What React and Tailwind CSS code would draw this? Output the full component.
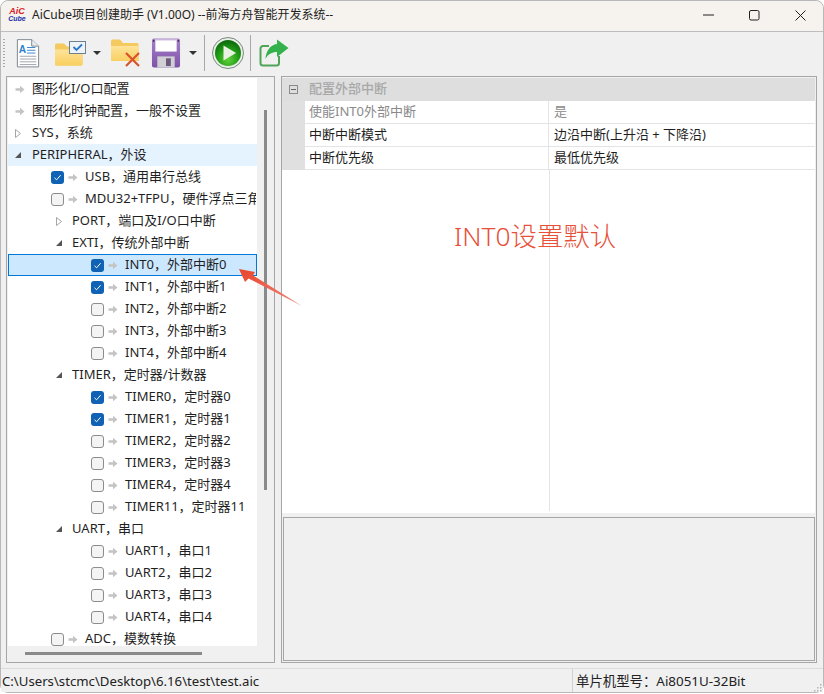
function Arrow() {
  return (
    <svg width="10" height="9" viewBox="0 0 10 9" className="shrink-0">
      <path d="M0.5 3.2H5V0.8L9.5 4.5L5 8.2V5.8H0.5Z" fill="#c4c4c4" />
    </svg>
  );
}

function Check({ on }) {
  return on ? (
    <span className="flex h-[13px] w-[13px] shrink-0 items-center justify-center rounded-[3px] bg-[#0f62b4]">
      <svg width="9" height="9" viewBox="0 0 9 9">
        <path d="M1.5 4.8L3.6 6.8L7.6 2.2" fill="none" stroke="#fff" strokeWidth="1" />
      </svg>
    </span>
  ) : (
    <span className="h-[13px] w-[13px] shrink-0 rounded-[3px] border border-[#8c8c8c] bg-[#f4f4f4]" />
  );
}

function Tri({ open }) {
  return open ? (
    <svg width="6" height="6" viewBox="0 0 6 6" className="shrink-0">
      <path d="M6 0V6H0Z" fill="#555" />
    </svg>
  ) : (
    <svg width="6" height="9" viewBox="0 0 6 9" className="shrink-0">
      <path d="M0.5 0.5L5.5 4.5L0.5 8.5Z" fill="#fff" stroke="#a6a6a6" />
    </svg>
  );
}

function LeafRow({ label, check, indent, state }) {
  const bg =
    state === "sel"
      ? "border border-[#0078d7] bg-[#cce8ff]"
      : "border border-transparent";
  return (
    <div className={`flex h-[22px] w-[249px] shrink-0 items-center overflow-hidden whitespace-nowrap ${bg} ${indent}`}>
      {check !== undefined && <Check on={check} />}
      {check !== undefined && <span className="w-1 shrink-0" />}
      <Arrow />
      <span className="ml-[7px] shrink-0 pb-[2px]">{label}</span>
    </div>
  );
}

function NodeRow({ label, open, indent, state, textGap }) {
  const bg = state === "hover" ? "bg-[#e5f3ff]" : "";
  return (
    <div className={`flex h-[22px] w-[249px] shrink-0 items-center overflow-hidden whitespace-nowrap ${bg} ${indent}`}>
      <span className="flex w-[6px] justify-center"><Tri open={open} /></span>
      <span className={`shrink-0 pb-[2px] ${textGap}`}>{label}</span>
    </div>
  );
}

function Leaf0({ label }) {
  return <LeafRow label={label} indent="pl-[6px]" />;
}
function L1({ label, check }) {
  return <LeafRow label={label} check={check} indent="pl-[42px]" />;
}
function L2({ label, check, state }) {
  return <LeafRow label={label} check={check} indent="pl-[82px]" state={state} />;
}

function DocIcon() {
  return (
    <svg width="24" height="31" viewBox="0 0 26 32">
      <path d="M1.5 1H17L24.5 8V30.5H1.5Z" fill="#fff" stroke="#7a8088" />
      <path d="M17 1V8H24.5" fill="#e8edf2" stroke="#7a8088" />
      <text x="3" y="15" fontSize="11" fontWeight="700" fill="#2f7fd0" fontFamily="Liberation Sans">A</text>
      <path d="M12 9.5H21M12 12.5H21M12 15.5H21" stroke="#2f7fd0" />
      <path d="M4 19H22M4 22H22M4 25H22M4 28H22" stroke="#9aa2aa" />
    </svg>
  );
}
function FolderCheck() {
  return (
    <svg width="32" height="25" viewBox="0 0 32 25">
      <defs><linearGradient id="fg" x1="0" y1="0" x2="0" y2="1"><stop offset="0" stopColor="#fde49a" /><stop offset="1" stopColor="#f9cf60" /></linearGradient></defs>
      <path d="M1 4a1.5 1.5 0 0 1 1.5-1.5H10L13 5.5H27a1.5 1.5 0 0 1 1.5 1.5V23a1.5 1.5 0 0 1-1.5 1.5H2.5A1.5 1.5 0 0 1 1 23Z" fill="#f4c95d" />
      <path d="M1 8.5H28.5V23a1.5 1.5 0 0 1-1.5 1.5H2.5A1.5 1.5 0 0 1 1 23Z" fill="url(#fg)" />
      <rect x="15.5" y="0.5" width="16" height="12" fill="#eef3f8" stroke="#6e7f90" />
      <path d="M19.5 6L22.5 9L28 3.5" fill="none" stroke="#2a78c8" strokeWidth="1.8" />
    </svg>
  );
}
function FolderX() {
  return (
    <svg width="32" height="28" viewBox="0 0 32 28">
      <defs><linearGradient id="fg2" x1="0" y1="0" x2="0" y2="1"><stop offset="0" stopColor="#fde49a" /><stop offset="1" stopColor="#f9cf60" /></linearGradient></defs>
      <path d="M1 2a1.5 1.5 0 0 1 1.5-1.5H10L13 4H27a1.5 1.5 0 0 1 1.5 1.5V22H2.5A1.5 1.5 0 0 1 1 20.5Z" fill="#f4c95d" />
      <path d="M1 7H28.5V22H2.5A1.5 1.5 0 0 1 1 20.5Z" fill="url(#fg2)" />
      <path d="M16 14L29 27M29 14L16 27" stroke="#d9532c" strokeWidth="2.2" />
    </svg>
  );
}
function Floppy() {
  return (
    <svg width="30" height="30" viewBox="0 0 30 31">
      <defs><linearGradient id="fp" x1="0" y1="0" x2="0" y2="1"><stop offset="0" stopColor="#a781c9" /><stop offset="1" stopColor="#7d52a8" /></linearGradient></defs>
      <rect x="0.5" y="0.5" width="29" height="30" rx="2" fill="url(#fp)" />
      <rect x="4" y="1" width="22" height="13" fill="#fff" />
      <rect x="4" y="1" width="22" height="1.5" fill="#c9b5dc" />
      <rect x="6" y="19" width="18" height="11.5" fill="#cfcfd4" />
      <rect x="15" y="21" width="5" height="8" fill="#6c5a7c" />
      <rect x="1.5" y="2" width="1.5" height="2" fill="#40305a" />
      <rect x="27" y="2" width="1.5" height="2" fill="#40305a" />
    </svg>
  );
}
function Play() {
  return (
    <svg width="32" height="32" viewBox="0 0 32 32">
      <defs>
        <radialGradient id="pg" cx="50%" cy="75%" r="70%"><stop offset="0" stopColor="#5fd13a" /><stop offset="0.6" stopColor="#1f9a15" /><stop offset="1" stopColor="#0d6d0c" /></radialGradient>
      </defs>
      <circle cx="16" cy="16" r="15.5" fill="#e8eee8" stroke="#7c8a7c" />
      <circle cx="16" cy="16" r="13" fill="url(#pg)" />
      <path d="M11.5 8.5L24 16L11.5 23.5Z" fill="#e9f2e2" />
    </svg>
  );
}
function Share() {
  return (
    <svg width="30" height="28" viewBox="0 0 30 28">
      <path d="M20 17V24a2.5 2.5 0 0 1-2.5 2.5H4A2.5 2.5 0 0 1 1.5 24V9.5A2.5 2.5 0 0 1 4 7H10" fill="none" stroke="#4fa457" strokeWidth="2" />
      <path d="M18 0.5L29.5 9L18 18V13C13 13 9 15 6.5 20C7 12 11 6 18 5Z" fill="#33b14a" />
    </svg>
  );
}
function Caret() {
  return <span className="h-0 w-0 border-x-[4px] border-t-[4px] border-x-transparent border-t-[#333]" />;
}
function Sep() {
  return <span className="h-[36px] w-px bg-[#a8a8a8]" />;
}

function PropRow({ k, v, muted }) {
  const tone = muted ? "text-[#8a8a8a]" : "";
  return (
    <div className="flex h-[23px] shrink-0">
      <div className="w-[23px] shrink-0 bg-[#e0e0e0]" />
      <div className={`flex w-[244px] shrink-0 items-center border-b border-r border-[#e4e4e4] bg-white pb-[2px] pl-1 ${tone}`}>{k}</div>
      <div className={`flex flex-1 items-center border-b border-[#e4e4e4] bg-white pb-[2px] pl-[5px] ${tone}`}>{v}</div>
    </div>
  );
}

export default function App() {
  return (
    <div className="h-[694px] w-[824px] overflow-hidden bg-white">
      <div className="relative text-[13px] leading-none text-[#1f1f1f] [font-family:'Noto_Sans','Noto_Sans_CJK_SC',sans-serif]">
        <div className="flex h-[693px] flex-col rounded-[8px] border border-[#b8b8b8] bg-[#f0f0f0]">
          <div className="flex h-[31px] shrink-0 items-center rounded-t-[8px] border-b border-[#bdbdbd] bg-[#f6f2ee] pb-[2px]">
            <div className="ml-[8px] flex w-[16px] flex-col items-center font-bold italic leading-[8px] [font-family:'Liberation_Sans',sans-serif]">
              <span className="text-[9px] text-[#d8222a]">AiC</span>
              <span className="text-[7px] text-[#2030a8]">Cube</span>
            </div>
            <span className="ml-[7px] text-[12px] text-[#222]">AiCube项目创建助手 (V1.00O) --前海方舟智能开发系统--</span>
            <div className="ml-auto flex items-center pr-[15px]">
              <svg width="11" height="2" viewBox="0 0 11 2" className="mr-[35px]"><path d="M0 1H11" stroke="#222" strokeWidth="1" /></svg>
              <svg width="11" height="11" viewBox="0 0 11 11" className="mr-[35px]"><rect x="0.5" y="0.5" width="9.5" height="9.5" rx="1.5" fill="none" stroke="#222" /></svg>
              <svg width="11" height="11" viewBox="0 0 11 11" className="mr-[2px]"><path d="M0.5 0.5L10.5 10.5M10.5 0.5L0.5 10.5" stroke="#222" /></svg>
            </div>
          </div>

          <div className="flex h-[44px] shrink-0 items-center bg-[#f0f0f0] pb-[2px]">
            <div className="ml-[2px] flex flex-col gap-[2px]">
              {[0, 1, 2, 3, 4, 5, 6, 7, 8, 9].map((i) => <span key={i} className="h-[1px] w-[2px] bg-[#a8a8a8]" />)}
            </div>
            <span className="ml-[11px] flex"><DocIcon /></span>
            <span className="ml-[14px] flex"><FolderCheck /></span>
            <span className="ml-[7px] flex"><Caret /></span>
            <span className="ml-[9px] flex"><FolderX /></span>
            <span className="ml-[9px] flex"><Floppy /></span>
            <span className="ml-[8px] flex"><Caret /></span>
            <span className="ml-[7px] flex"><Sep /></span>
            <span className="ml-[7px] flex"><Play /></span>
            <span className="ml-[6px] flex"><Sep /></span>
            <span className="ml-[8px] flex"><Share /></span>
          </div>

          <div className="flex min-h-0 flex-1 pl-[5px] pr-[6px]">
            <div className="flex h-[587px] w-[269px] shrink-0 flex-col border border-[#a6a6a6] py-px pl-px">
              <div className="flex h-[568px] shrink-0">
                <div className="flex h-[568px] w-[249px] shrink-0 flex-col overflow-hidden bg-white">
                  <Leaf0 label="图形化I/O口配置" />
                  <Leaf0 label="图形化时钟配置，一般不设置" />
                  <NodeRow label="SYS，系统" open={false} indent="pl-[7px]" textGap="ml-[11px]" />
                  <NodeRow label="PERIPHERAL，外设" open indent="pl-[7px]" state="hover" textGap="ml-[11px]" />
                  <L1 label="USB，通用串行总线" check />
                  <L1 label="MDU32+TFPU，硬件浮点三角函数" check={false} />
                  <NodeRow label="PORT，端口及I/O口中断" open={false} indent="pl-[48px]" textGap="ml-[10px]" />
                  <NodeRow label="EXTI，传统外部中断" open indent="pl-[48px]" textGap="ml-[10px]" />
                  <L2 label="INT0，外部中断0" check state="sel" />
                  <L2 label="INT1，外部中断1" check />
                  <L2 label="INT2，外部中断2" check={false} />
                  <L2 label="INT3，外部中断3" check={false} />
                  <L2 label="INT4，外部中断4" check={false} />
                  <NodeRow label="TIMER，定时器/计数器" open indent="pl-[48px]" textGap="ml-[10px]" />
                  <L2 label="TIMER0，定时器0" check />
                  <L2 label="TIMER1，定时器1" check />
                  <L2 label="TIMER2，定时器2" check={false} />
                  <L2 label="TIMER3，定时器3" check={false} />
                  <L2 label="TIMER4，定时器4" check={false} />
                  <L2 label="TIMER11，定时器11" check={false} />
                  <NodeRow label="UART，串口" open indent="pl-[48px]" textGap="ml-[10px]" />
                  <L2 label="UART1，串口1" check={false} />
                  <L2 label="UART2，串口2" check={false} />
                  <L2 label="UART3，串口3" check={false} />
                  <L2 label="UART4，串口4" check={false} />
                  <L1 label="ADC，模数转换" check={false} />
                </div>
                <div className="flex flex-1 justify-center pt-[32px]">
                  <span className="h-[380px] w-[3px] bg-[#8a8a8a]" />
                </div>
              </div>
              <div className="flex flex-1 items-center pl-[17px]">
                <span className="h-[3px] w-[177px] bg-[#8a8a8a]" />
              </div>
            </div>

            <div className="ml-[6px] flex h-[587px] flex-1 flex-col border border-[#a6a6a6] py-px pr-px">
              <div className="flex h-[435px] shrink-0 flex-col bg-white">
                <div className="flex h-[23px] shrink-0 items-center bg-[#dedede] pb-[2px] font-medium text-[#a8a8a8]">
                  <span className="ml-[7px] mt-[2px] flex h-[9px] w-[9px] items-center justify-center border border-[#8a8a8a]">
                    <span className="h-px w-[5px] bg-[#666]" />
                  </span>
                  <span className="ml-[11px]">配置外部中断</span>
                </div>
                <PropRow k="使能INT0外部中断" v="是" muted />
                <PropRow k="中断中断模式" v="边沿中断(上升沿 + 下降沿)" />
                <PropRow k="中断优先级" v="最低优先级" />
                <div className="flex min-h-0 flex-1">
                  <div className="mb-[2px] ml-[267px] w-px bg-[#e4e4e4]" />
                </div>
              </div>
              <div className="ml-px mt-[4px] h-[144px] shrink-0 border border-[#a6a6a6] bg-[#f0f0f0]" />
            </div>
          </div>

          <div className="mt-[5px] flex h-[24px] shrink-0 items-center border-t border-[#dcdcdc] bg-[#f0f0f0] text-[13.2px] text-[#222]">
            <span className="w-[571px] pl-px pt-[2px]">C:\Users\stcmc\Desktop\6.16\test\test.aic</span>
            <span className="flex h-full items-center border-l border-[#d0d0d0] pl-[3px] pt-[2px] text-[13.4px]">单片机型号：Ai8051U-32Bit</span>
            <svg width="8" height="8" viewBox="0 0 8 8" className="ml-auto mr-[1px] mt-[14px]">
              <path d="M6 0h1.5v1.5H6ZM3 3h1.5v1.5H3ZM6 3h1.5v1.5H6ZM0 6h1.5v1.5H0ZM3 6h1.5v1.5H3ZM6 6h1.5v1.5H6Z" fill="#b4b4b4" />
            </svg>
          </div>
        </div>

        <span className="absolute left-[454px] top-[219px] text-[26.4px] font-light leading-[34px] text-[#e8503a]">INT0设置默认</span>
        <svg width="70" height="46" viewBox="0 0 70 46" className="absolute left-[236px] top-[264px]">
          <defs><linearGradient id="ar" x1="1" y1="1" x2="0" y2="0"><stop offset="0" stopColor="#f08878" /><stop offset="1" stopColor="#e8442c" /></linearGradient></defs>
          <path d="M3 5L19 8L17 11.5L66 42L12.5 14.5L9 18Z" fill="url(#ar)" />
        </svg>
      </div>
    </div>
  );
}
